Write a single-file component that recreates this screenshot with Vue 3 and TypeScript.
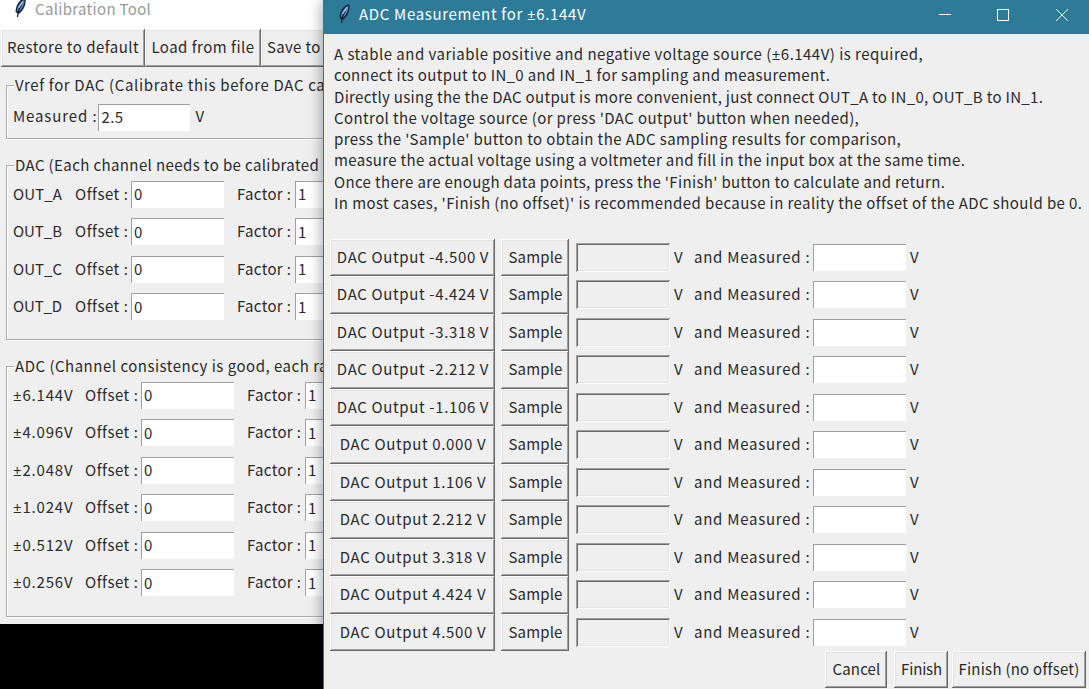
<script setup lang="ts">
interface Line { text: string; width: number }

const intro: Line[] = [
  { text: 'A stable and variable positive and negative voltage source (±6.144V) is required,', width: 589 },
  { text: 'connect its output to IN_0 and IN_1 for sampling and measurement.', width: 496 },
  { text: 'Directly using the the DAC output is more convenient, just connect OUT_A to IN_0, OUT_B to IN_1.', width: 709 },
  { text: "Control the voltage source (or press 'DAC output' button when needed),", width: 525 },
  { text: "press the 'Sample' button to obtain the ADC sampling results for comparison,", width: 567 },
  { text: 'measure the actual voltage using a voltmeter and fill in the input box at the same time.', width: 631 },
  { text: "Once there are enough data points, press the 'Finish' button to calculate and return.", width: 611 },
  { text: "In most cases, 'Finish (no offset)' is recommended because in reality the offset of the ADC should be 0.", width: 748 },
]

const outputs: string[] = ['-4.500', '-4.424', '-3.318', '-2.212', '-1.106', '0.000', '1.106', '2.212', '3.318', '4.424', '4.500']
const dacChannels: string[] = ['OUT_A', 'OUT_B', 'OUT_C', 'OUT_D']
const adcRanges: string[] = ['6.144V', '4.096V', '2.048V', '1.024V', '0.512V', '0.256V']

// Separates each plus-minus sign from the text around it, so it can take a narrower glyph.
const parts = (text: string): string[] => text.split(/(±)/)

// Tracks a label out or in so that it takes the given width in pixels.
const vFit = {
  mounted(el: HTMLElement, binding: { value: number }) {
    const count = (el.textContent ?? '').length
    const natural = el.getBoundingClientRect().width
    if (count > 1) el.style.letterSpacing = `${(binding.value - natural) / (count - 0.5)}px`
  },
}
</script>

<template>
  <main class="desktop">
    <section class="window tool">
      <header class="tool-title">
        <svg class="feather" viewBox="0 0 14 20">
          <path d="M12.500 .5C8 .5 3 5 2.500 14l3 2C10.500 13 13.500 6 12.500 .5Z" fill="#17232f" />
          <path d="M11.300 1.800C7 4 4.300 8 3.800 13.200L6 13.800C9.800 10.500 12 6 11.300 1.800Z" fill="#4b80bd" />
          <path d="M8.500 7C6.500 9.500 5 13 4.500 19" fill="none" stroke="#10161c" stroke-width="1.200" />
          <path d="M9.800 3.200L5.800 9.800" stroke="#b5d2ee" stroke-width="1.200" />
        </svg>
        <span v-fit="116" class="txt">Calibration Tool</span>
      </header>
      <div class="toolbar">
        <button class="btn b1"><span v-fit="132" class="txt">Restore to default</span></button>
        <button class="btn b2"><span v-fit="103" class="txt">Load from file</span></button>
        <button class="btn b3"><span v-fit="80" class="txt">Save to file</span></button>
      </div>
      <div class="group vref">
        <div class="legend"><span v-fit="383" class="txt">Vref for DAC (Calibrate this before DAC calibration)</span></div>
        <div class="vref-row">
          <span v-fit="84" class="txt">Measured :</span>
          <div class="entry"><span v-fit="22" class="txt">2.5</span></div>
          <span class="txt">V</span>
        </div>
      </div>
      <div class="group dac">
        <div class="legend"><span v-fit="306" class="txt tail">DAC (Each channel needs to be calibrated</span></div>
        <div v-for="c in dacChannels" :key="c" class="cal-row">
          <span class="name"><span v-fit="49" class="txt">{{ c }}</span></span>
          <span class="off"><span v-fit="53" class="txt">Offset :</span></span>
          <div class="entry"><span class="txt">0</span></div>
          <span class="fac"><span v-fit="54" class="txt">Factor :</span></span>
          <div class="entry"><span class="txt">1</span></div>
        </div>
      </div>
      <div class="group adc">
        <div class="legend"><span v-fit="342" class="txt">ADC (Channel consistency is good, each range</span></div>
        <div v-for="r in adcRanges" :key="r" class="cal-row wide">
          <span class="name"><span v-fit="60" class="txt"><span class="pm">±</span>{{ r }}</span></span>
          <span class="off"><span v-fit="53" class="txt">Offset :</span></span>
          <div class="entry"><span class="txt">0</span></div>
          <span class="fac"><span v-fit="54" class="txt">Factor :</span></span>
          <div class="entry"><span class="txt">1</span></div>
        </div>
      </div>
    </section>

    <section class="window dialog">
      <header class="dialog-title">
        <svg class="feather" viewBox="0 0 14 20">
          <path d="M12.500 .5C8 .5 3 5 2.500 14l3 2C10.500 13 13.500 6 12.500 .5Z" fill="#14222f" />
          <path d="M11.300 1.800C7 4 4.300 8 3.800 13.200L6 13.800C9.800 10.500 12 6 11.300 1.800Z" fill="#4b80bd" />
          <path d="M8.500 7C6.500 9.500 5 13 4.500 19" fill="none" stroke="#10161c" stroke-width="1.200" />
          <path d="M9.800 3.200L5.800 9.800" stroke="#b5d2ee" stroke-width="1.200" />
        </svg>
        <span v-fit="227" class="txt">ADC Measurement for <span class="pm">±</span>6.144V</span>
        <svg class="controls" viewBox="0 0 130 14" shape-rendering="crispEdges">
          <path d="M0 6.500H12" />
          <path d="M58.500 1.500H69.500V12.500H58.500Z" />
          <path d="M117 1L129 13M129 1L117 13" shape-rendering="auto" />
        </svg>
      </header>
      <div class="intro">
        <div v-for="l in intro" :key="l.text" class="intro-line"><span v-fit="l.width" class="txt"><span v-for="(p, i) in parts(l.text)" :key="i" :class="{ pm: p === '±' }">{{ p }}</span></span></div>
      </div>
      <div class="rows">
        <div v-for="o in outputs" :key="o" class="row">
          <button class="btn"><span v-fit="o.startsWith('-') ? 152 : 146" class="txt">DAC Output {{ o }} V</span></button>
          <button class="btn sample"><span v-fit="54" class="txt">Sample</span></button>
          <div class="readout"></div>
          <span class="txt volt">V</span>
          <span class="and"><span v-fit="116" class="txt">and Measured :</span></span>
          <div class="entry"></div>
          <span class="txt volt">V</span>
        </div>
      </div>
      <footer class="actions">
        <button class="btn cancel"><span v-fit="48" class="txt">Cancel</span></button>
        <button class="btn finish"><span v-fit="41" class="txt">Finish</span></button>
        <button class="btn plain"><span v-fit="121" class="txt">Finish (no offset)</span></button>
      </footer>
    </section>
  </main>
</template>

<style>
html, body { margin: 0; overflow: hidden; background: #000; }
</style>

<style scoped>
.desktop {
  position: relative; width: 1089px; height: 689px; overflow: hidden; background: #000;
  font: 15px/20px "Noto Sans CJK SC", "Noto Sans", sans-serif; color: #2a2a2a;
}
.desktop * { box-sizing: border-box; }
.window { position: absolute; top: 0; background: #efefef; }
.txt { display: inline-block; white-space: pre; line-height: 20px; height: 21px; }
.pm { font-family: "Open Sans", "Noto Sans", sans-serif; line-height: 1; }
.feather { width: 14px; height: 20px; flex: none; }

.btn {
  display: flex; align-items: center; justify-content: center; flex: none;
  margin: 0; padding: 0 0 .5px 0; height: 37.500px; font: inherit; color: inherit; background: #efefef; border: 0;
  box-shadow: inset -1px -1px #696969, inset 1px 1px #fff, inset -2px -2px #a0a0a0, inset 2px 2px #e3e3e3;
}
.entry {
  height: 27px; padding-left: 2px; display: flex; align-items: center; background: #fff;
  border-top: 1.500px solid #a0a0a0; border-left: 1.500px solid #a0a0a0;
}

.tool { left: 0; width: 324px; height: 624px; overflow: hidden; }
.tool-title { height: 29px; background: #fff; color: #999; display: flex; padding-left: 13px; }
.tool-title .feather { margin-top: -2px; }
.tool-title .txt { margin-left: 8px; margin-top: -1px; }
.toolbar { display: flex; width: 420px; padding-left: 1px; }
.b1 { width: 144px; }
.b2 { width: 116px; }
.b3 { width: 100px; justify-content: flex-start; padding-left: 6px; }
.group { position: relative; width: 440px; margin-left: 6px; border: 1px solid #aaa; box-shadow: inset 1px 1px #fff, 0 1px #fff; padding-left: 6px; }
.legend { height: 22px; margin-top: -12px; display: flex; }
.legend .txt { background: #efefef; padding: 0 1px; margin-left: 1px; line-height: 21px; }
.legend .tail { box-shadow: 8px 0 #efefef; }
.vref { height: 54px; margin-top: 18px; }
.vref-row { display: flex; align-items: center; height: 37px; margin-top: 3px; }
.vref-row .txt { margin-top: -1px; }
.vref-row .entry { width: 92px; margin: 0 5px 0 1px; }
.dac { height: 175px; margin-top: 26px; }
.adc { height: 251px; margin-top: 26px; }
.cal-row { height: 37.500px; display: grid; grid-template-columns: 63px 55px 93px 71px 93px; align-items: center; }
.cal-row.wide { grid-template-columns: 73px 55px 93px 71px 93px; }
.cal-row .name, .cal-row .off, .cal-row .fac { display: flex; }
.cal-row .off { margin-left: -1px; }
.cal-row .fac { padding-left: 13px; }

.dialog { left: 323px; width: 766px; height: 689px; border-left: 1px solid #2d7b99; box-shadow: 0 0 14px rgba(0, 0, 0, .4); }
.dialog-title { display: flex; height: 34px; background: #2d7b99; color: #fff; padding-left: 13px; }
.dialog-title .feather { margin-top: 4px; }
.dialog-title .txt { margin-left: 8px; margin-top: 4px; }
.controls { width: 130px; height: 14px; margin: 8px 20px 0 auto; fill: none; stroke: #fff; stroke-width: 1; }
.intro { height: 204.500px; padding: 10px 0 0 10px; }
.intro-line { height: 21.250px; display: flex; }
.row { display: flex; align-items: center; height: 37.500px; padding-left: 6px; }
.row .btn { width: 165px; padding-left: 1px; }
.row .btn.sample { width: 68px; margin-left: 6px; }
.readout {
  width: 94px; height: 29px; margin-left: 7px;
  box-shadow: inset 1px 1px #a0a0a0, inset -1px -1px #fff, inset 2px 2px #696969, inset -2px -2px #e3e3e3;
}
.volt { width: 16px; margin-left: 4px; }
.and { width: 119px; display: flex; }
.row .entry { width: 93px; }
.row .and { margin-left: 4px; }
.actions { display: flex; justify-content: flex-end; padding: 0 3px 0 0; margin-top: -.5px; }
.cancel { width: 62px; margin-right: 7px; padding-left: 1px; }
.finish { width: 54px; margin-right: 4px; padding-left: 1px; }
.plain { width: 134px; }
</style>
